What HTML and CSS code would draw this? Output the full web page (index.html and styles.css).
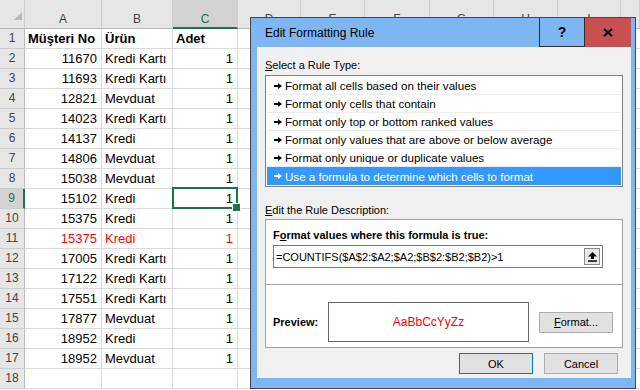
FILE: index.html
```html
<!DOCTYPE html>
<html lang="tr">
<head>
    <meta charset="UTF-8">
    <meta name="viewport" content="width=device-width, initial-scale=1.0">
    <title>Edit Formatting Rule</title>
    <link rel="stylesheet" href="styles.css">
</head>
<body>
    <div class="sheet">
        <div class="corner"></div>
        <div class="ch">A</div>
        <div class="ch">B</div>
        <div class="ch on">C</div>
        <div class="ch">D</div>
        <div class="ch">E</div>
        <div class="ch">F</div>
        <div class="ch">G</div>
        <div class="ch">H</div>
        <div class="ch">I</div>
        <div class="ch"></div>
        <div class="rest"></div>

        <div class="rh">1</div><div class="c b">Müşteri No</div><div class="c b">Ürün</div><div class="c b">Adet</div>
        <div class="rh">2</div><div class="c n">11670</div><div class="c">Kredi Kartı</div><div class="c n">1</div>
        <div class="rh">3</div><div class="c n">11693</div><div class="c">Kredi Kartı</div><div class="c n">1</div>
        <div class="rh">4</div><div class="c n">12821</div><div class="c">Mevduat</div><div class="c n">1</div>
        <div class="rh">5</div><div class="c n">14023</div><div class="c">Kredi Kartı</div><div class="c n">1</div>
        <div class="rh">6</div><div class="c n">14137</div><div class="c">Kredi</div><div class="c n">1</div>
        <div class="rh">7</div><div class="c n">14806</div><div class="c">Mevduat</div><div class="c n">1</div>
        <div class="rh">8</div><div class="c n">15038</div><div class="c">Mevduat</div><div class="c n">1</div>
        <div class="rh on">9</div><div class="c n">15102</div><div class="c">Kredi</div><div class="c n sel">1</div>
        <div class="rh">10</div><div class="c n">15375</div><div class="c">Kredi</div><div class="c n">1</div>
        <div class="rh">11</div><div class="c n dup">15375</div><div class="c dup">Kredi</div><div class="c n dup">1</div>
        <div class="rh">12</div><div class="c n">17005</div><div class="c">Kredi Kartı</div><div class="c n">1</div>
        <div class="rh">13</div><div class="c n">17122</div><div class="c">Kredi Kartı</div><div class="c n">1</div>
        <div class="rh">14</div><div class="c n">17551</div><div class="c">Kredi Kartı</div><div class="c n">1</div>
        <div class="rh">15</div><div class="c n">17877</div><div class="c">Mevduat</div><div class="c n">1</div>
        <div class="rh">16</div><div class="c n">18952</div><div class="c">Kredi</div><div class="c n">1</div>
        <div class="rh">17</div><div class="c n">18952</div><div class="c">Mevduat</div><div class="c n">1</div>
        <div class="rh">18</div><div class="c"></div><div class="c"></div><div class="c"></div>
    </div>

    <div class="dialog">
        <div class="titlebar">
            <div class="title">Edit Formatting Rule</div>
            <div class="tbtn help">?</div>
            <div class="tbtn close">
                <svg width="10" height="9" viewBox="0 0 10 9"><path d="M1 1l8 7M9 1l-8 7" stroke="#000" stroke-width="2.2"/></svg>
            </div>
        </div>

        <div class="panel">
            <div class="lbl"><u>S</u>elect a Rule Type:</div>
            <div class="rules">
                <div class="rule"><svg class="arr" width="8" height="6" viewBox="0 0 8 6"><path d="M0 2h4V0l4 3-4 3V4H0z"/></svg>Format all cells based on their values</div>
                <div class="rule"><svg class="arr" width="8" height="6" viewBox="0 0 8 6"><path d="M0 2h4V0l4 3-4 3V4H0z"/></svg>Format only cells that contain</div>
                <div class="rule"><svg class="arr" width="8" height="6" viewBox="0 0 8 6"><path d="M0 2h4V0l4 3-4 3V4H0z"/></svg>Format only top or bottom ranked values</div>
                <div class="rule"><svg class="arr" width="8" height="6" viewBox="0 0 8 6"><path d="M0 2h4V0l4 3-4 3V4H0z"/></svg>Format only values that are above or below average</div>
                <div class="rule"><svg class="arr" width="8" height="6" viewBox="0 0 8 6"><path d="M0 2h4V0l4 3-4 3V4H0z"/></svg>Format only unique or duplicate values</div>
                <div class="rule on"><svg class="arr" width="8" height="6" viewBox="0 0 8 6"><path d="M0 2h4V0l4 3-4 3V4H0z"/></svg>Use a formula to determine which cells to format</div>
            </div>

            <div class="lbl desc-lbl"><u>E</u>dit the Rule Description:</div>
            <div class="desc">
                <div class="formula-sec">
                    <div class="b">F<u>o</u>rmat values where this formula is true:</div>
                    <div class="formula">
                        <span class="ftext">=COUNTIFS($A$2:$A2;$A2;$B$2:$B2;$B2)&gt;1</span>
                        <span class="pick">
                            <svg width="9" height="10" viewBox="0 0 9 10"><path d="M4.5 0L9 4.5H6V7H3V4.5H0z"/><rect x="0" y="8.3" width="9" height="1.5"/></svg>
                        </span>
                    </div>
                </div>
                <div class="preview-sec">
                    <div class="b preview-lbl">Preview:</div>
                    <div class="preview">AaBbCcYyZz</div>
                    <div class="btn fmt-btn"><u>F</u>ormat...</div>
                </div>
            </div>

            <div class="actions">
                <div class="btn default">OK</div>
                <div class="btn">Cancel</div>
            </div>
        </div>
    </div>
</body>
</html>
```

FILE: styles.css
```css
* {
    box-sizing: border-box;
}

body {
    margin: 0;
    width: 640px;
    height: 390px;
    overflow: hidden;
    position: relative;
    background: #fff;
    font-family: "Liberation Sans", Arial, sans-serif;
}

/* spreadsheet */
.sheet {
    display: grid;
    grid-template-columns: 25px 77px 71px 65px 63px 64px 65px 64px 64px 63px 19px;
    grid-template-rows: 29px;
    grid-auto-rows: 20px;
    height: 390px;
    overflow: hidden;
    font-size: 13px;
    color: #000;
}

.corner {
    background: #e6e6e6;
    border-right: 1px solid #cdcdcd;
    border-bottom: 1px solid #b9b9b9;
    display: flex;
    align-items: flex-end;
    justify-content: flex-end;
    padding: 0 2px 8px 0;
}

.corner::after {
    content: "";
    border-left: 8px solid transparent;
    border-bottom: 8px solid #b8b8b8;
}

.ch {
    background: #e6e6e6;
    color: #444;
    border-right: 1px solid #cdcdcd;
    border-bottom: 1px solid #b9b9b9;
    text-align: center;
    font-size: 12px;
    line-height: 14px;
    padding-top: 12px;
}

.ch.on {
    background: #d2d2d2;
    color: #217346;
    border-bottom: 2px solid #217346;
}

.rh {
    background: #e6e6e6;
    color: #444;
    border-right: 1px solid #b9b9b9;
    border-bottom: 1px solid #cdcdcd;
    text-align: center;
    font-size: 12px;
    line-height: 19px;
}

.rh.on {
    background: #d2d2d2;
    color: #217346;
    border-right: 2px solid #217346;
}

.c {
    border-right: 1px solid #dadada;
    border-bottom: 1px solid #dadada;
    padding: 0 3px;
    line-height: 20px;
    white-space: nowrap;
    overflow: hidden;
}

.n {
    text-align: right;
    padding-right: 4px;
}

.b {
    font-weight: bold;
}

.dup {
    color: #ff0000;
}

.sel {
    position: relative;
    overflow: visible;
    z-index: 1;
}

.sel::after {
    content: "";
    position: absolute;
    top: -2px;
    left: -1px;
    right: -1px;
    bottom: -1px;
    border: 2px solid #217346;
}

.sel::before {
    content: "";
    position: absolute;
    right: -4px;
    bottom: -4px;
    width: 7px;
    height: 7px;
    background: #217346;
    border: 1px solid #fff;
    z-index: 2;
}

.rest {
    grid-column: 5 / -1;
    grid-row: 2 / span 18;
    background:
        repeating-linear-gradient(to bottom, transparent 0 19px, #dadada 19px 20px),
        repeating-linear-gradient(to right, transparent 0 62px, #dadada 62px 63px, transparent 63px 64px);
}

/* dialog */
.dialog {
    position: absolute;
    left: 250px;
    top: 17px;
    width: 386px;
    height: 372px;
    border: 1px solid #474747;
    background: #7db6f1;
    padding: 0 4px 10px 6px;
    display: flex;
    flex-direction: column;
    font-size: 11px;
    color: #000;
}

.titlebar {
    height: 29px;
    display: flex;
    align-items: center;
}

.title {
    flex: 1;
    padding-left: 8px;
    font-size: 12px;
}

.tbtn {
    width: 46px;
    height: 29px;
    display: flex;
    align-items: center;
    justify-content: center;
}

.help {
    border: 1px solid #2d2d2d;
    border-top: 0;
    font-weight: bold;
    font-size: 14px;
}

.close {
    background: #c75050;
}

.panel {
    flex: 1;
    background: #f0f0f0;
    padding: 10px 8px 0;
}

.lbl {
    line-height: 16px;
}

.rules {
    margin-top: 2px;
    border: 1px solid #828282;
    padding: 1px;
    background: #fff;
}

.rule {
    height: 18px;
    display: flex;
    align-items: center;
    gap: 3px;
    padding-left: 7px;
    border-bottom: 1px solid #ececec;
    font-size: 11.6px;
}

.rule.on {
    background: #3399ff;
    color: #fff;
    border-bottom: 0;
}

.arr {
    fill: #000;
}

.rule.on .arr {
    fill: #fff;
}

.desc-lbl {
    margin-top: 15px;
}

.desc {
    margin-top: 1px;
    border: 1px solid #a0a0a0;
    background: #fff;
}

.formula-sec {
    padding: 7px 7px 16px;
    border-bottom: 1px solid #a0a0a0;
    line-height: 16px;
}

.formula {
    margin-top: 2px;
    margin-right: 12px;
    height: 23px;
    border: 1px solid #7a7a7a;
    display: flex;
    align-items: center;
    padding-left: 2px;
}

.ftext {
    flex: 1;
}

.pick {
    width: 16px;
    height: 17px;
    margin-right: 2px;
    border: 1px solid #8a8a8a;
    background: #e8e8e8;
    display: flex;
    align-items: center;
    justify-content: center;
}

.preview-sec {
    display: flex;
    align-items: center;
    padding: 17px 7px 5px;
}

.preview-lbl {
    width: 55px;
}

.preview {
    width: 201px;
    height: 40px;
    border: 1px solid #646464;
    color: #ff0000;
    font-size: 12px;
    display: flex;
    align-items: center;
    justify-content: center;
}

.btn {
    width: 74px;
    height: 21px;
    border: 1px solid #adadad;
    background: #e1e1e1;
    display: flex;
    align-items: center;
    justify-content: center;
}

.btn.default {
    border-color: #0078d7;
}

.fmt-btn {
    margin-left: 10px;
}

.actions {
    display: flex;
    justify-content: flex-end;
    gap: 11px;
    margin-top: 5px;
    padding-right: 5px;
}
```
